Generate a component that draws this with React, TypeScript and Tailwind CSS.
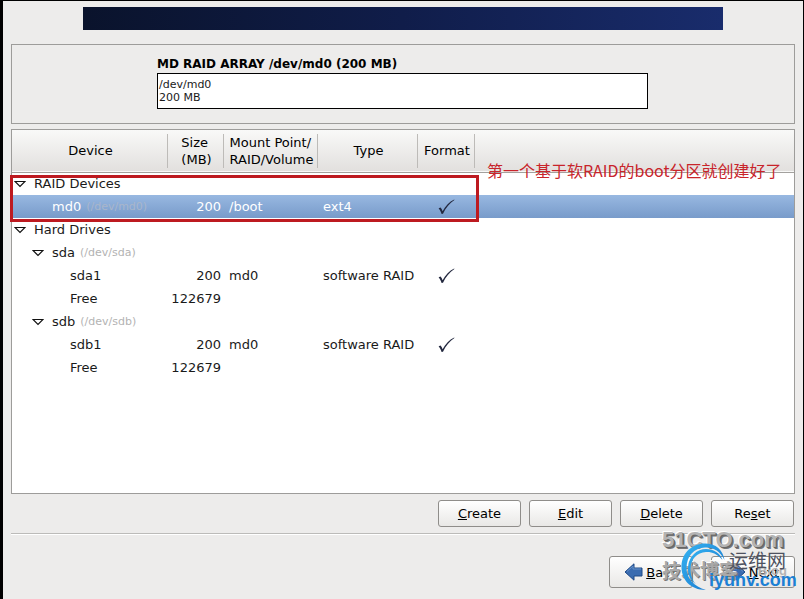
import { PropsWithChildren, ReactNode } from "react";

type Row = {
  name: string;
  path?: string;
  depth: number;
  open?: boolean;
  size?: string;
  mount?: string;
  type?: string;
  format?: boolean;
  selected?: boolean;
};

const rows: Row[] = [
  { name: "RAID Devices", depth: 0, open: true },
  {
    name: "md0",
    path: "(/dev/md0)",
    depth: 1,
    size: "200",
    mount: "/boot",
    type: "ext4",
    format: true,
    selected: true,
  },
  { name: "Hard Drives", depth: 0, open: true },
  { name: "sda", path: "(/dev/sda)", depth: 1, open: true },
  { name: "sda1", depth: 2, size: "200", mount: "md0", type: "software RAID", format: true },
  { name: "Free", depth: 2, size: "122679" },
  { name: "sdb", path: "(/dev/sdb)", depth: 1, open: true },
  { name: "sdb1", depth: 2, size: "200", mount: "md0", type: "software RAID", format: true },
  { name: "Free", depth: 2, size: "122679" },
];

const indents = ["pl-0", "pl-[18px]", "pl-[36px]"];

const Expander = ({ name }: { name: string }) => (
  <button aria-label={`Collapse ${name}`} className="block" type="button">
    <svg className="block" height="8" viewBox="0 0 12 8" width="12">
      <path d="M1 1.5h10L6 6.5z" fill="#fff" stroke="#111" strokeWidth="1.2" />
    </svg>
  </button>
);

const Check = () => (
  <svg className="mx-auto block" height="16" viewBox="0 0 17 16" width="17">
    <path
      d="M0.6 9.2 L2.6 8.4 C3.6 9.6 4.1 10.9 4.6 12.3 C7.6 7 11.2 2.9 16.2 0.6 L16.4 1 C11.4 4.2 7.8 9 5 14.7 L3.6 15 C2.8 12.6 1.8 10.8 0.6 9.2z"
      fill="#23283f"
    />
  </svg>
);

const HeadCell = ({ children }: PropsWithChildren) => (
  <th className="h-[42px] p-0 font-normal">
    <div className="flex h-[34px] items-center justify-center border-r border-[#bdbbb8] pl-[2px] text-left leading-[17px]">
      {children}
    </div>
  </th>
);

const ActionButton = ({ children }: PropsWithChildren) => (
  <button
    className="h-[27px] w-[83px] rounded-[3px] border border-[#8f8d8a] bg-linear-to-b from-white to-[#e9e8e6]"
    type="button"
  >
    {children}
  </button>
);

const NavButton = ({ icon, children }: PropsWithChildren<{ icon: ReactNode }>) => (
  <button
    className="flex h-8 w-[84px] items-center justify-center gap-[3px] rounded-[3px] border border-[#8f8d8a] bg-linear-to-b from-white to-[#e9e8e6]"
    type="button"
  >
    {icon}
    <span>{children}</span>
  </button>
);

const Arrow = ({ flip }: { flip?: boolean }) => (
  <svg
    className={flip ? "-scale-x-100" : ""}
    height="18"
    viewBox="0 0 19 18"
    width="19"
  >
    <path
      d="M1 9 L10 0.8 V5 H18 V13 H10 V17.2z"
      fill="#3a6cb0"
      stroke="#1f4a86"
      strokeLinejoin="round"
    />
    <path d="M3 8.5 L9 3 V6 H17" fill="none" stroke="#6590c8" />
  </svg>
);

const Watermark = () => (
  <div className="pointer-events-none absolute right-[5px] bottom-[7px] h-[66px] w-[138px]">
    <div className="absolute top-[2px] left-[2px] font-['Liberation_Sans_Narrow','Liberation_Sans',sans-serif] text-[22px] leading-[24px] font-bold whitespace-nowrap text-[#b4b4b4] [text-shadow:1px_1px_0_#666,2px_2px_0_#777,-1px_-1px_0_#fff]">
      51CTO.com
    </div>
    <div className="absolute top-[32px] left-[2px] font-['Noto_Sans_CJK_SC',sans-serif] text-[19px] leading-[24px] font-bold whitespace-nowrap text-[#a9a9a9] [text-shadow:1px_1px_0_#777,-1px_-1px_0_#fff]">
      技术博客
    </div>
    <div className="absolute top-[33px] left-[98px] font-['Liberation_Sans',sans-serif] text-[13px] leading-[24px] font-bold whitespace-nowrap text-[#b4b4b4]">
      Blog
    </div>
    <svg
      className="absolute top-[17px] left-[21px]"
      height="48"
      viewBox="0 0 44 48"
      width="44"
    >
      <defs>
        <linearGradient id="swirl" x1="0" x2="1" y1="0" y2="1">
          <stop offset="0" stopColor="#35b4f2" />
          <stop offset="1" stopColor="#1673cc" />
        </linearGradient>
      </defs>
      <path
        d="M25 47 C9 47 0 36 0.5 23 C1 9 12 0.5 24 0.5 C35 0.5 42 7 43.5 17 C39 8 32 4 24 4.5 C13 5 5.5 13 5.5 25 C5.5 35 13 43.5 25 47z"
        fill="url(#swirl)"
      />
      <path
        d="M15 41.5 C8.5 36 6.5 30 7 24 C8 13 16 6 25 6 C33 6 39 10 41.5 17 C36 10.500 30 8.500 25 9 C16 9.500 9.500 16 9.500 26 C9.500 32 11 37 15 41.5z"
        fill="url(#swirl)"
      />
    </svg>
    <div className="absolute top-[22px] left-[69px] font-['Noto_Sans_CJK_SC',sans-serif] text-[19px] leading-[24px] whitespace-nowrap text-[#4e5260]">
      运维网
    </div>
    <div className="absolute top-[42px] left-[49px] font-['Liberation_Sans',sans-serif] text-[18px] leading-[24px] font-bold whitespace-nowrap text-[#1c80d4]">
      iyunv.com
    </div>
  </div>
);

function App() {
  return (
    <div className="relative flex min-h-screen flex-col border-t border-r border-l-[3px] border-black bg-[#edeceb] pt-[6px] pr-2 pb-[11px] pl-2 font-['DejaVu_Sans',sans-serif] text-[13px] leading-[17px] text-[#1a1a1a]">
      <div className="mr-[72px] ml-[72px] h-[23px] bg-linear-to-r from-[#0a132c] via-[#101d4a] to-[#192c6c]" />

      <section className="mt-[14px] h-20 border border-[#9d9c9a] pt-[11px] pr-[146px] pl-[145px]">
        <h1 className="text-[12px] leading-[17px] font-bold whitespace-nowrap text-black">
          MD RAID ARRAY /dev/md0 (200 MB)
        </h1>
        <div className="h-9 border border-black bg-white px-px pt-1 text-[11px] leading-[13px]">
          <div>/dev/md0</div>
          <div>200 MB</div>
        </div>
      </section>

      <main className="relative mt-[5px] flex-1 border border-[#9d9c9a] bg-white">
        <table className="w-full table-fixed border-collapse">
          <colgroup>
            <col className="w-[156px]" />
            <col className="w-[56px]" />
            <col className="w-[94px]" />
            <col className="w-[100px]" />
            <col className="w-[57px]" />
            <col />
          </colgroup>
          <thead>
            <tr className="border-b border-[#a3a19e] bg-linear-to-b from-[#f9f9f8] to-[#e2e0de] text-black">
              <HeadCell>Device</HeadCell>
              <HeadCell>
                Size
                <br />
                (MB)
              </HeadCell>
              <HeadCell>
                Mount Point/
                <br />
                RAID/Volume
              </HeadCell>
              <HeadCell>Type</HeadCell>
              <HeadCell>Format</HeadCell>
              <td />
            </tr>
          </thead>
          <tbody>
            {rows.map((row, i) => (
              <tr
                className={
                  row.selected
                    ? "bg-linear-to-b from-[#98b8e1] to-[#789bca] text-white"
                    : ""
                }
                key={i}
              >
                <td className="h-[23px] p-0">
                  <div className={`flex items-center ${indents[row.depth]}`}>
                    <div className="w-[22px] pl-[2px]">
                      {row.open && <Expander name={row.name} />}
                    </div>
                    <span>{row.name}</span>
                    {row.path && (
                      <span
                        className={
                          row.selected
                            ? "pl-[5px] text-[11px] text-[#a9b6cb]"
                            : "pl-[5px] text-[11px] text-[#b3b3b3]"
                        }
                      >
                        {row.path}
                      </span>
                    )}
                  </div>
                </td>
                <td className="p-0 pr-[3px] text-right">{row.size}</td>
                <td className="p-0 pl-[5px]">{row.mount}</td>
                <td className="p-0 pl-[5px] whitespace-nowrap">{row.type}</td>
                <td className="p-0">{row.format && <Check />}</td>
                <td />
              </tr>
            ))}
          </tbody>
        </table>

        <div className="absolute top-[45px] -left-[2px] h-[47px] w-[469px] border-[3px] border-[#bd1a20]" />
        <p className="absolute top-[28px] left-[475px] font-['Noto_Sans_CJK_SC',sans-serif] text-[16px] leading-[24px] whitespace-nowrap text-[#c8242a]">
          第一个基于软RAID的boot分区就创建好了
        </p>
      </main>

      <div className="mt-[6px] flex justify-end gap-2 pr-px text-black">
        <ActionButton>
          <u>C</u>reate
        </ActionButton>
        <ActionButton>
          <u>E</u>dit
        </ActionButton>
        <ActionButton>
          <u>D</u>elete
        </ActionButton>
        <ActionButton>
          Re<u>s</u>et
        </ActionButton>
      </div>

      <hr className="mt-[6px] border-t border-b border-t-[#bcbbb9] border-b-white" />

      <div className="mt-[21px] flex justify-end gap-[18px] text-black">
        <NavButton icon={<Arrow />}>
          <u>B</u>ack
        </NavButton>
        <NavButton icon={<Arrow flip />}>
          <u>N</u>ext
        </NavButton>
      </div>

      <Watermark />
    </div>
  );
}

export default App;
